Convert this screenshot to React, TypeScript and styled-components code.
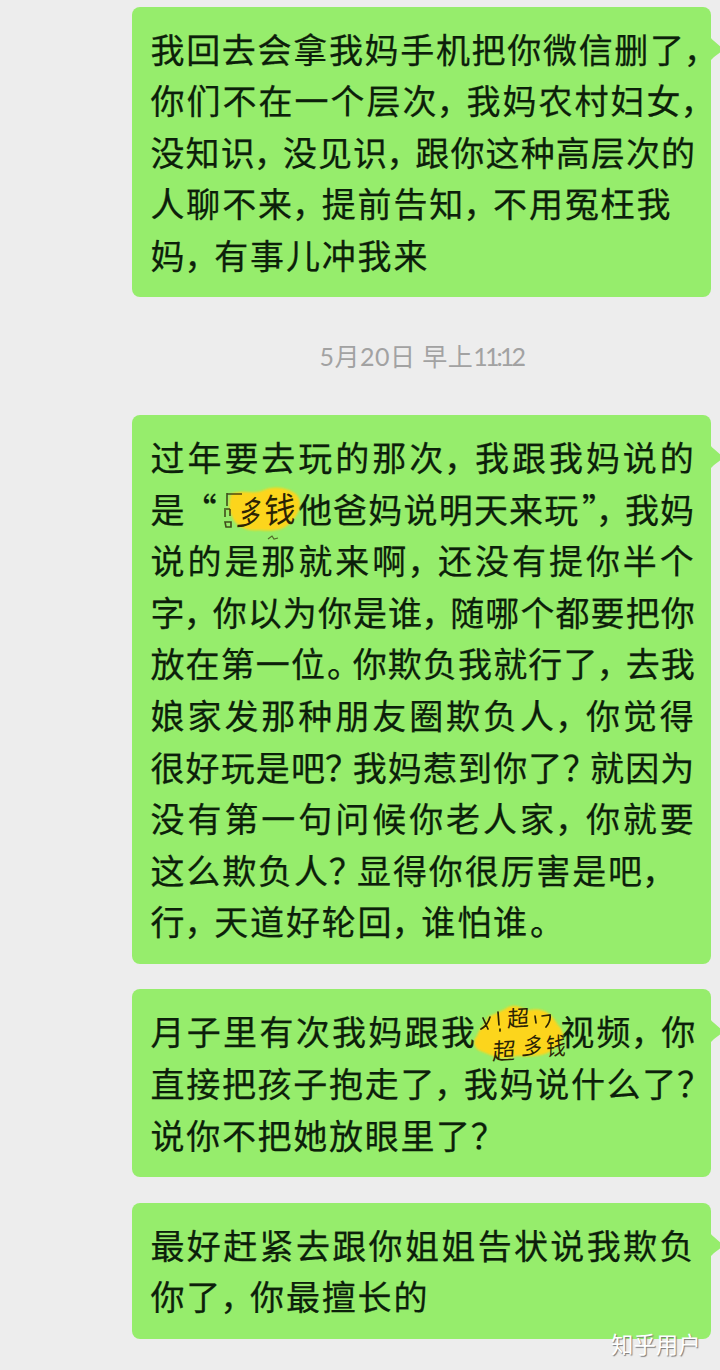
import React from 'react';
import styled, { createGlobalStyle } from 'styled-components';

const FONT_SIZE = 34;

const GlobalStyle = createGlobalStyle`
  * { box-sizing: border-box; }
  body {
    margin: 0;
    background: #ededed;
    font-family: 'Noto Sans CJK SC', sans-serif;
  }
`;

const Screen = styled.main`
  position: relative;
  width: 720px;
  height: 1370px;
  overflow: hidden;
  padding: 6.5px 9px 0 131.5px;
  background: #ededed;
`;

const Thread = styled.div`
  display: flex;
  flex-direction: column;
  gap: 25.5px;
`;

const Bubble = styled.section`
  position: relative;
  padding: 16px 0 17px 19px;
  border-radius: 8px;
  background: #96ed6c;
  color: #0c200a;
`;

const Tail = styled.svg`
  position: absolute;
  left: 100%;
  top: 29px;
  margin-left: -1px;
`;

const Line = styled.p<{ $advance: number }>`
  margin: 0;
  height: 51.6px;
  line-height: 51.6px;
  font-size: ${FONT_SIZE}px;
  letter-spacing: ${(p) => p.$advance - FONT_SIZE}px;
  white-space: pre;
  text-spacing-trim: space-all;
  -webkit-text-stroke: 0.25px currentColor;
`;

const Mark = styled.span<{ $shift: number; $space: number }>`
  margin-left: ${(p) => p.$shift}px;
  letter-spacing: ${(p) => p.$space - p.$shift}px;
`;

const Timestamp = styled.time`
  display: block;
  height: 66.5px;
  line-height: 67px;
  text-align: center;
  white-space: nowrap;
  font-family: Lato, 'Noto Sans CJK SC', sans-serif;
  font-size: 25px;
  color: #a2a2a2;
  letter-spacing: 0.5px;
`;

const Clock = styled.span`
  letter-spacing: -2.9px;
`;

const Sticker = styled.svg<{ $left: number; $right: number }>`
  position: relative;
  z-index: 1;
  display: inline-block;
  vertical-align: top;
  overflow: visible;
  margin-left: ${(p) => p.$left}px;
  margin-right: ${(p) => p.$right}px;
`;

const Watermark = styled.div`
  position: absolute;
  left: 611px;
  top: 1326.5px;
  font-size: 22.4px;
  line-height: 32px;
  color: #fff;
  text-shadow: 1px 1px 1px #777;
`;

const INK = '#2b2405';

const MoneySticker = () => (
  <Sticker $left={0} $right={0} width="77" height="51" viewBox="0 0 77 51">
    <defs>
      <filter id="soft-a" x="-20%" y="-20%" width="140%" height="140%">
        <feGaussianBlur stdDeviation="1.3" />
      </filter>
    </defs>
    <path
      d="M10 11C24 6 32 12 43 7C55 2 68 5 76 12C83 21 77 32 70 39C62 49 47 48 38 47C25 49 13 42 11 33C7 28 8 18 10 11Z"
      fill="#fcd51d"
      filter="url(#soft-a)"
    />
    <path d="M6 11H21M6 10V23M3 26H9M4 27V34M9 26V33M4 39H10V44H5Z" fill="none" stroke={INK} strokeWidth="1.6" opacity=".8" />
    <text transform="translate(15 41) rotate(12) skewX(-6) scale(.8 1.4)" fontSize="26" fill={INK} letterSpacing="0">多</text>
    <text transform="translate(43 41) rotate(-5) skewX(-6) scale(1.05 1.15)" fontSize="30" fill={INK} letterSpacing="0">钱</text>
    <path d="M47 56L51 53L53 56L57 55" fill="none" stroke={INK} strokeWidth="1.2" opacity=".65" />
  </Sticker>
);

const VideoSticker = () => (
  <Sticker $left={0} $right={0} width="83" height="51" viewBox="0 0 83 51">
    <defs>
      <filter id="soft-b" x="-20%" y="-20%" width="140%" height="140%">
        <feGaussianBlur stdDeviation="1.3" />
      </filter>
    </defs>
    <path
      d="M0 31C2 23 8 21 11 12C18 8 24 7 31 2C42 -2 43 4 53 5C66 2 75 9 81 20C90 28 86 38 77 44C67 53 49 51 39 51C26 57 14 50 6 47C-4 44 -5 36 0 31Z"
      fill="#fcd51d"
      filter="url(#soft-b)"
    />
    <path d="M6 13L11 24M13 12C11 19 8 22 4 24M21 7L22 20M23 24L23 26M58 11L59 18M65 11L73 10Q74 16 69 22" fill="none" stroke={INK} strokeWidth="1.7" strokeLinecap="round" />
    <text transform="translate(30 22) rotate(-4) skewX(-5)" fontSize="22" fill={INK} letterSpacing="0">超</text>
    <text transform="translate(15 55) rotate(-3) skewX(-6)" fontSize="23" fill={INK} letterSpacing="0">超</text>
    <text transform="translate(44 49) rotate(9) skewX(-6) scale(.85 1.15)" fontSize="22" fill={INK} letterSpacing="0">多</text>
    <text transform="translate(69 51) rotate(-5) skewX(-5) scale(.9 1.1)" fontSize="22" fill={INK} letterSpacing="0">钱</text>
  </Sticker>
);

type Row = { advance: number; text: string };

// Narrow punctuation: glyph offset inside its cell and width removed from the cell.
const MARKS: Record<string, { shift: number; trim: number }> = {
  '，': { shift: -2, trim: 8 },
  '。': { shift: 1, trim: 8.5 },
  '？': { shift: -1, trim: 8.5 },
  '“': { shift: -3, trim: 0 },
  '”': { shift: 2.5, trim: 17 },
};

const renderText = ({ text, advance }: Row) =>
  text.split(/([，。？“”①②])/).map((part, i) => {
    if (part === '①') return <MoneySticker key={i} />;
    if (part === '②') return <VideoSticker key={i} />;
    const mark = MARKS[part];
    return mark ? (
      <Mark key={i} $shift={mark.shift} $space={advance - FONT_SIZE - mark.trim}>
        {part}
      </Mark>
    ) : (
      part
    );
  });

const Message = ({ rows }: { rows: Row[] }) => (
  <Bubble>
    {rows.map((row) => (
      <Line key={row.text} $advance={row.advance}>
        {renderText(row)}
      </Line>
    ))}
    <Tail width="14" height="27" viewBox="0 0 14 27">
      <path d="M0 0Q1 3 4 5L12 12Q13 13.500 12 15L4 21Q1 23 0 27Z" fill="#96ed6c" />
    </Tail>
  </Bubble>
);

const first: Row[] = [
  { advance: 35.68, text: '我回去会拿我妈手机把你微信删了，' },
  { advance: 36, text: '你们不在一个层次，我妈农村妇女，' },
  { advance: 35.1, text: '没知识，没见识，跟你这种高层次的' },
  { advance: 35.85, text: '人聊不来，提前告知，不用冤枉我' },
  { advance: 35.85, text: '妈，有事儿冲我来' },
];

const second: Row[] = [
  { advance: 36.95, text: '过年要去玩的那次，我跟我妈说的' },
  { advance: 35.2, text: '是“①他爸妈说明天来玩”，我妈' },
  { advance: 36.95, text: '说的是那就来啊，还没有提你半个' },
  { advance: 35.08, text: '字，你以为你是谁，随哪个都要把你' },
  { advance: 35.12, text: '放在第一位。你欺负我就行了，去我' },
  { advance: 36.95, text: '娘家发那种朋友圈欺负人，你觉得' },
  { advance: 35.12, text: '很好玩是吧？我妈惹到你了？就因为' },
  { advance: 36.95, text: '没有第一句问候你老人家，你就要' },
  { advance: 35.85, text: '这么欺负人？显得你很厉害是吧，' },
  { advance: 35.85, text: '行，天道好轮回，谁怕谁。' },
];

const third: Row[] = [
  { advance: 36.3, text: '月子里有次我妈跟我②视频，你' },
  { advance: 35.7, text: '直接把孩子抱走了，我妈说什么了？' },
  { advance: 35.7, text: '说你不把她放眼里了？' },
];

const fourth: Row[] = [
  { advance: 36.35, text: '最好赶紧去跟你姐姐告状说我欺负' },
  { advance: 35.85, text: '你了，你最擅长的' },
];

export default function App() {
  return (
    <Screen>
      <GlobalStyle />
      <Thread>
        <Message rows={first} />
        <Timestamp>
          5月20日 早上<Clock>11:12</Clock>
        </Timestamp>
        <Message rows={second} />
        <Message rows={third} />
        <Message rows={fourth} />
      </Thread>
      <Watermark>知乎用户</Watermark>
    </Screen>
  );
}
